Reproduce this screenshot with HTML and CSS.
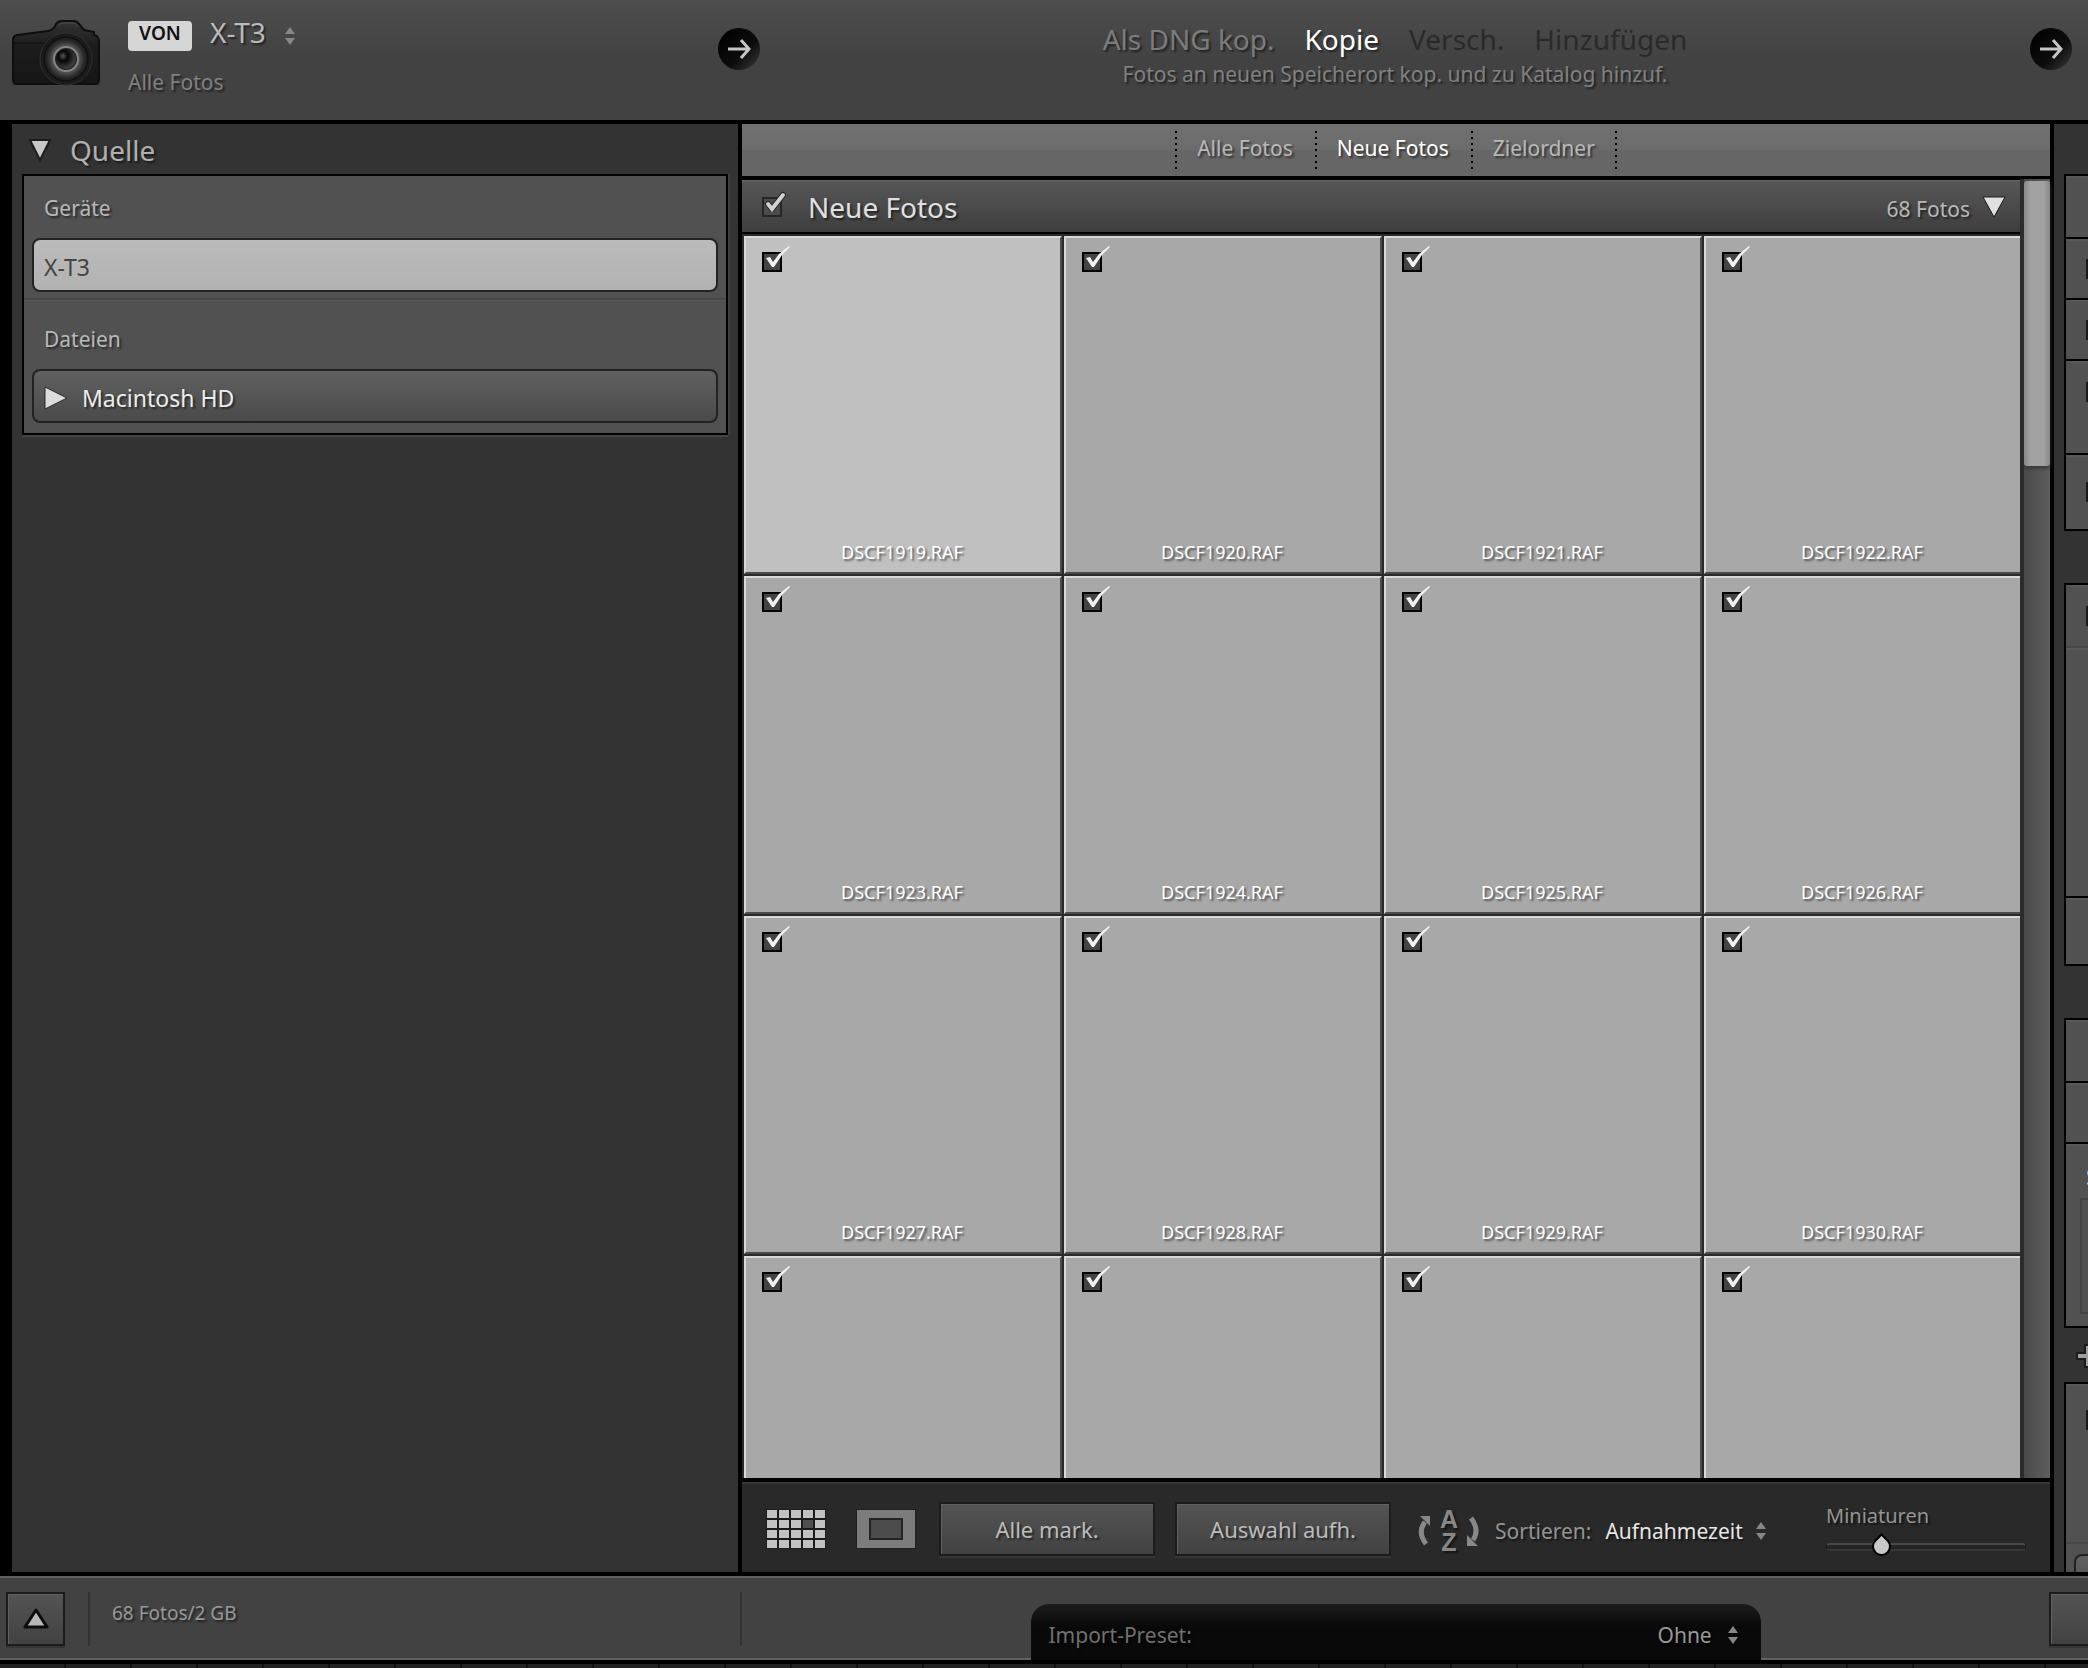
FILE: index.html
```html
<!doctype html>
<html lang="de">
<head>
<meta charset="utf-8">
<title>Fotos importieren</title>
<link rel="stylesheet" href="styles.css">
</head>

<body>
<!-- shared icons -->
<svg class="defs" width="0" height="0" aria-hidden="true">
	<symbol id="check" viewBox="0 0 30 30">
		<path d="M4 14 L8 13 L11 18 L17 10 L27 2 L28 3 L20 11 L12 23 L10 23 Z" fill="#f2f2f2"/>
	</symbol>
	<symbol id="checkHead" viewBox="0 0 30 30">
		<path d="M6 15 L10 20 L21 6" fill="none" stroke="#222" stroke-width="6" stroke-linecap="round" stroke-linejoin="round"/>
		<path d="M6 15 L10 20 L21 6" fill="none" stroke="#d0d0d0" stroke-width="4" stroke-linecap="round"/>
	</symbol>
	<symbol id="updown" viewBox="0 0 12 18">
		<path d="M6 0 L11 7 H1 Z M6 18 L11 11 H1 Z" fill="#888"/>
	</symbol>
	<symbol id="go" viewBox="0 0 42 42">
		<circle cx="21" cy="21" r="21" fill="url(#goFill)"/>
		<path d="M10 21 H30 M23 12 L31 21 L23 30" fill="none" stroke="#c4c4c4" stroke-width="3"/>
	</symbol>
	<linearGradient id="goFill" x1="0" y1="0" x2="1" y2="1">
		<stop offset="0" stop-color="#000"/>
		<stop offset="0.6" stop-color="#0c0c0c"/>
		<stop offset="1" stop-color="#3c3c3c"/>
	</linearGradient>
</svg>

<header class="top">
	<div class="source">
		<svg class="camera" viewBox="0 0 90 68" aria-hidden="true">
			<defs>
				<linearGradient id="camBody" x1="0" y1="0" x2="0" y2="1">
					<stop offset="0" stop-color="#343434"/>
					<stop offset="0.4" stop-color="#1c1c1c"/>
					<stop offset="1" stop-color="#161616"/>
				</linearGradient>
				<radialGradient id="camLens" cx="0.5" cy="0.5" r="0.5">
					<stop offset="0" stop-color="#6a6a6a"/>
					<stop offset="0.6" stop-color="#555"/>
					<stop offset="0.8" stop-color="#303030"/>
					<stop offset="1" stop-color="#151515"/>
				</radialGradient>
				<radialGradient id="camGlass" cx="0.35" cy="0.35" r="0.6">
					<stop offset="0" stop-color="#555"/>
					<stop offset="0.4" stop-color="#050505"/>
					<stop offset="1" stop-color="#3a3a3a"/>
				</radialGradient>
			</defs>
			<path d="M1 20 Q1 16 5 15 L36 11 Q42 10 44 4 Q46 1 50 1 H62 Q65 1 67 4 L72 10 L82 12 V15 L85 16 Q87 18 87 22 V60 Q87 64 83 64 H5 Q1 64 1 60 Z" fill="url(#camBody)" stroke="#0e0e0e" stroke-width="2"/>
			<path d="M2 23 H34" stroke="#0e0e0e"/>
			<path d="M46 6 Q48 3 51 3 H61 Q64 3 66 7" fill="none" stroke="#4c4c4c"/>
			<circle cx="54" cy="39" r="26" fill="#1b1b1b" stroke="#303030"/>
			<circle cx="54" cy="39" r="22" fill="url(#camLens)" stroke="#0c0c0c"/>
			<circle cx="54" cy="39" r="12" fill="#222" stroke="#858585" stroke-width="2"/>
			<circle cx="54" cy="39" r="10" fill="url(#camGlass)"/>
		</svg>
		<div class="sourceText">
			<div class="sourceLine">
				<span class="von">VON</span>
				<label class="picker">
					<select class="sourceSelect" aria-label="Von"><option>X-T3</option></select>
					<svg class="updown" aria-hidden="true"><use href="#updown"/></svg>
				</label>
			</div>
			<p class="hint">Alle Fotos</p>
		</div>
		<button class="go" aria-label="Quelle wählen"><svg><use href="#go"/></svg></button>
	</div>
	<div class="modes">
		<div class="modeRow">
			<button class="mode">Als DNG kop.</button>
			<button class="mode on">Kopie</button>
			<button class="mode off" disabled>Versch.</button>
			<button class="mode off" disabled>Hinzufügen</button>
		</div>
		<p class="hint">Fotos an neuen Speicherort kop. und zu Katalog hinzuf.</p>
	</div>
	<div class="target">
		<button class="go" aria-label="Ziel wählen"><svg><use href="#go"/></svg></button>
	</div>
</header>

<main class="work">
	<aside class="left">
		<h2 class="panelTitle">
			<svg class="fold" viewBox="0 0 24 24" aria-hidden="true"><path d="M2 2 H22 L12 22 Z" fill="#c8c8c8" stroke="#1c1c1c" stroke-width="2"/></svg>
			Quelle
		</h2>
		<div class="panelBox">
			<section class="group">
				<h3>Geräte</h3>
				<button class="volume picked">X-T3</button>
			</section>
			<section class="group">
				<h3>Dateien</h3>
				<button class="volume">
					<svg class="fold" viewBox="0 0 24 24" aria-hidden="true"><path d="M1 1 L23 12 L1 23 Z" fill="#ddd" stroke="#2a2a2a"/></svg>
					Macintosh HD
				</button>
			</section>
		</div>
	</aside>

	<section class="middle">
		<nav class="filters">
			<a href="#">Alle Fotos</a>
			<a href="#" class="on">Neue Fotos</a>
			<a href="#">Zielordner</a>
		</nav>
		<div class="browser">
			<div class="photos">
				<div class="photosHead">
					<label class="tick dim"><input type="checkbox" checked aria-label="Alle neuen Fotos"><svg><use href="#checkHead"/></svg></label>
					<h2>Neue Fotos</h2>
					<span class="count">68 Fotos</span>
					<svg class="fold" viewBox="0 0 24 24" aria-hidden="true"><path d="M1 2 H23 L12 22 Z" fill="#e0e0e0" stroke="#1c1c1c"/></svg>
				</div>
				<div class="grid">
					<label class="cell picked"><span class="tick"><input type="checkbox" checked><svg><use href="#check"/></svg></span><span class="name">DSCF1919.RAF</span></label>
					<label class="cell"><span class="tick"><input type="checkbox" checked><svg><use href="#check"/></svg></span><span class="name">DSCF1920.RAF</span></label>
					<label class="cell"><span class="tick"><input type="checkbox" checked><svg><use href="#check"/></svg></span><span class="name">DSCF1921.RAF</span></label>
					<label class="cell"><span class="tick"><input type="checkbox" checked><svg><use href="#check"/></svg></span><span class="name">DSCF1922.RAF</span></label>
					<label class="cell"><span class="tick"><input type="checkbox" checked><svg><use href="#check"/></svg></span><span class="name">DSCF1923.RAF</span></label>
					<label class="cell"><span class="tick"><input type="checkbox" checked><svg><use href="#check"/></svg></span><span class="name">DSCF1924.RAF</span></label>
					<label class="cell"><span class="tick"><input type="checkbox" checked><svg><use href="#check"/></svg></span><span class="name">DSCF1925.RAF</span></label>
					<label class="cell"><span class="tick"><input type="checkbox" checked><svg><use href="#check"/></svg></span><span class="name">DSCF1926.RAF</span></label>
					<label class="cell"><span class="tick"><input type="checkbox" checked><svg><use href="#check"/></svg></span><span class="name">DSCF1927.RAF</span></label>
					<label class="cell"><span class="tick"><input type="checkbox" checked><svg><use href="#check"/></svg></span><span class="name">DSCF1928.RAF</span></label>
					<label class="cell"><span class="tick"><input type="checkbox" checked><svg><use href="#check"/></svg></span><span class="name">DSCF1929.RAF</span></label>
					<label class="cell"><span class="tick"><input type="checkbox" checked><svg><use href="#check"/></svg></span><span class="name">DSCF1930.RAF</span></label>
					<label class="cell"><span class="tick"><input type="checkbox" checked aria-label="Foto 13"><svg><use href="#check"/></svg></span></label>
					<label class="cell"><span class="tick"><input type="checkbox" checked aria-label="Foto 14"><svg><use href="#check"/></svg></span></label>
					<label class="cell"><span class="tick"><input type="checkbox" checked aria-label="Foto 15"><svg><use href="#check"/></svg></span></label>
					<label class="cell"><span class="tick"><input type="checkbox" checked aria-label="Foto 16"><svg><use href="#check"/></svg></span></label>
				</div>
			</div>
			<div class="scroll"><div class="scrollThumb"></div></div>
		</div>
		<div class="toolbar">
			<button class="view" aria-label="Rasteransicht">
				<svg viewBox="0 0 60 40">
					<rect width="60" height="40" fill="#1c1c1c"/>
					<path d="M1 5H59 M1 15H59 M1 25H59 M1 35H59" stroke="#c2c2c2" stroke-width="8" stroke-dasharray="10 2"/>
					<rect x="37" y="11" width="10" height="8" fill="#505050"/>
				</svg>
			</button>
			<button class="view" aria-label="Lupenansicht">
				<svg viewBox="0 0 60 40">
					<rect width="60" height="40" fill="#202020"/>
					<rect x="1" y="1" width="58" height="38" fill="#7c7c7c"/>
					<rect x="14" y="10" width="32" height="20" fill="#4c4c4c" stroke="#242424" stroke-width="2"/>
				</svg>
			</button>
			<button class="push">Alle mark.</button>
			<button class="push">Auswahl aufh.</button>
			<div class="sort">
				<button class="order" aria-label="Sortierrichtung">
					<svg viewBox="0 0 64 48">
						<g fill="none" stroke="#888" stroke-width="5">
							<path d="M9 37 Q0 25 8 15"/>
							<path d="M54 11 Q63 23 56 33"/>
						</g>
						<path d="M3 9 H13 V19 Z M50 28 V39 H61 Z" fill="#888"/>
						<text x="32" y="21" text-anchor="middle">A</text>
						<text x="32" y="44" text-anchor="middle">Z</text>
					</svg>
				</button>
				<label class="sortLabel" for="sortBy">Sortieren:</label>
				<span class="picker">
					<select id="sortBy"><option>Aufnahmezeit</option></select>
					<svg class="updown" aria-hidden="true"><use href="#updown"/></svg>
				</span>
			</div>
			<div class="thumbs">
				<label for="thumbSize">Miniaturen</label>
				<input id="thumbSize" type="range" min="0" max="100" value="25">
			</div>
		</div>
	</section>

	<aside class="right">
		<div class="rightBox">
			<div class="rowS"></div>
			<div class="rowS"><input type="checkbox" aria-label="Option 1"></div>
			<div class="rowS"><input type="checkbox" aria-label="Option 2"></div>
			<div class="rowM"><input type="checkbox" aria-label="Option 3"></div>
			<div class="rowL"><input type="checkbox" aria-label="Option 4"></div>
		</div>
		<div class="rightBox">
			<div class="rowS faint"><input type="checkbox" aria-label="Option 5"></div>
			<div class="rowXL"></div>
			<div class="rowM"></div>
		</div>
		<div class="rightBox">
			<div class="rowS"></div>
			<div class="rowS"></div>
			<div class="rowText"><span>S</span><div class="well"></div></div>
		</div>
		<button class="plus" aria-label="Hinzufügen">
			<svg viewBox="0 0 24 24"><path d="M9 1 H15 V9 H23 V15 H15 V23 H9 V15 H1 V9 H9 Z" fill="#a0a0a0" stroke="#1c1c1c" stroke-width="2"/></svg>
		</button>
		<div class="rightBox last">
			<div class="rowDest"><input type="checkbox" aria-label="In Unterordner"></div>
			<button class="volume" aria-label="Ziel"></button>
		</div>
	</aside>
</main>

<footer class="bottom">
	<div class="status">
		<button class="push small" aria-label="Weniger Optionen">
			<svg viewBox="0 0 28 24"><path d="M14 3 L25 20 H3 Z" fill="#b8b8b8" stroke="#0c0c0c" stroke-width="3" stroke-linejoin="round"/></svg>
		</button>
		<p class="total">68 Fotos/2 GB</p>
	</div>
	<div class="presetArea">
		<div class="preset">
			<label for="preset">Import-Preset:</label>
			<span class="picker">
				<select id="preset"><option>Ohne</option></select>
				<svg class="updown" aria-hidden="true"><use href="#updown"/></svg>
			</span>
		</div>
	</div>
	<button class="push cut" aria-label="Importieren"></button>
</footer>
<div class="filmstrip"></div>
</body>
</html>
```

FILE: styles.css
```css
	*
	{
		box-sizing: border-box;
	}
	body
	{
		display: flex;
		flex-direction: column;
		height: 100vh;
		margin: 0;
		overflow: hidden;
		background: #000;
		color: #aaa;
		font-family: "Noto Sans", "Open Sans", sans-serif;
		font-size: 20px;
		line-height: 28px;
		text-shadow: 2px 2px 2px rgba(0,0,0,0.5);
	}
	h2, h3, p
	{
		margin: 0;
		font-weight: normal;
	}
	button, select, input
	{
		margin: 0;
		padding: 0;
		border: none;
		background: none;
		color: inherit;
		font: inherit;
		text-shadow: inherit;
	}
	select, input
	{
		appearance: none;
	}
	svg
	{
		display: block;
		flex: none;
	}
	.defs
	{
		position: absolute;
	}
	.picker
	{
		display: flex;
		align-items: center;
		gap: 14px;
	}
	.updown
	{
		width: 12px;
		height: 18px;
	}
	.fold
	{
		width: 24px;
		height: 24px;
	}

/*header bar*/
	.top
	{
		display: grid;
		grid-template-columns: 760px 1fr 58px;
		height: 120px;
		flex: none;
		background: linear-gradient(#4d4d4d, #424242 50%, #424242);
	}
	.source
	{
		display: flex;
		align-items: flex-start;
		padding: 20px 0 0 12px;
	}
	.camera
	{
		width: 90px;
		height: 68px;
	}
	.sourceText
	{
		flex: 1;
		padding-left: 26px;
	}
	.sourceLine
	{
		display: flex;
		align-items: center;
		gap: 18px;
		height: 24px;
		margin-bottom: 24px;
	}
	.sourceLine .picker
	{
		gap: 18px;
	}
	.sourceLine .updown
	{
		margin-top: 8px;
	}
	.von
	{
		width: 64px;
		height: 30px;
		margin-top: 8px;
		border-radius: 4px;
		background: #d6d6d6;
		color: #111;
		font-size: 19px;
		font-weight: 600;
		line-height: 24px;
		text-align: center;
		text-shadow: none;
	}
	.sourceSelect
	{
		font-size: 28px;
		line-height: 36px;
		color: #bbb;
	}
	.hint
	{
		color: #808080;
		font-size: 21px;
	}
	.go
	{
		width: 42px;
		height: 42px;
		margin-top: 8px;
	}
	.go svg
	{
		width: 42px;
		height: 42px;
	}
	.target
	{
		padding-top: 20px;
	}
	.modes
	{
		display: flex;
		flex-direction: column;
		align-items: center;
		gap: 3px;
		padding-top: 21px;
	}
	.modeRow
	{
		display: flex;
		gap: 30px;
	}
	.mode
	{
		color: #7c7c7c;
		font-size: 28px;
		line-height: 36px;
	}
	.mode.on
	{
		color: #fff;
	}
	.mode.off
	{
		color: #2a2a2a;
		text-shadow: none;
	}

	.work
	{
		display: grid;
		grid-template-columns: 726px 1fr 34px;
		gap: 4px;
		flex: 1;
		min-height: 0;
		padding: 4px 0 4px 12px;
	}

/*source panel on the left*/
	.left
	{
		padding: 6px 10px;
		background: #333;
	}
	.panelTitle
	{
		display: flex;
		align-items: center;
		gap: 18px;
		padding: 0 6px 4px;
		color: #b0b0b0;
		font-size: 28px;
		line-height: 40px;
	}
	.panelBox
	{
		border: 2px solid #000;
		background: #515151;
		box-shadow: 0 2px 0 #444, 2px 0 0 #3e3e3e;
	}
	.group
	{
		padding: 18px 8px 6px;
		border-bottom: 2px solid #484848;
	}
	.group + .group
	{
		padding: 24px 8px 10px;
		border-bottom: none;
		border-top: 1px solid #595959;
	}
	.group h3
	{
		padding: 0 12px 16px;
		color: #b8b8b8;
		font-size: 21px;
	}
	.volume
	{
		display: flex;
		align-items: center;
		gap: 14px;
		width: 100%;
		height: 54px;
		padding: 3px 10px 0;
		border: 2px solid #222;
		border-radius: 8px;
		background: linear-gradient(#606060, #4a4a4a);
		color: #ececec;
		font-size: 23px;
	}
	.volume.picked
	{
		background: linear-gradient(#bbb, #b2b2b2);
		color: #444;
		text-shadow: none;
	}

/*photo browser*/
	.middle
	{
		display: flex;
		flex-direction: column;
		min-width: 0;
		min-height: 0;
	}
	.filters
	{
		display: flex;
		justify-content: center;
		align-items: center;
		height: 52px;
		flex: none;
		background: linear-gradient(#707070, #6c6c6c 50%, #666 50%);
	}
	.filters a
	{
		padding: 3px 22px 7px;
		color: #b8b8b8;
		font-size: 21px;
		text-decoration: none;
		/*dotted divider on the left edge*/
		background: repeating-linear-gradient(#000 0 2px, transparent 2px 6px) left / 2px 100% no-repeat;
	}
	.filters a:last-child
	{
		background: repeating-linear-gradient(#000 0 2px, transparent 2px 6px) left / 2px 100% no-repeat,
			repeating-linear-gradient(#000 0 2px, transparent 2px 6px) right / 2px 100% no-repeat;
	}
	.filters a.on
	{
		color: #fff;
	}
	.browser
	{
		display: flex;
		flex: 1;
		min-height: 0;
		border-top: 3px solid #000;
	}
	.photos
	{
		display: flex;
		flex-direction: column;
		flex: 1;
		min-width: 0;
		overflow: hidden;
		background: #2a2a2a;
	}
	.photosHead
	{
		display: flex;
		align-items: center;
		height: 55px;
		flex: none;
		padding: 2px 14px 0 20px;
		border-top: 1px solid #000;
		border-bottom: 2px solid #000;
		background: linear-gradient(#686868, #565656 4%, #3e3e3e);
		color: #e0e0e0;
	}
	.photosHead h2
	{
		flex: 1;
		padding-left: 26px;
		font-size: 28px;
	}
	.count
	{
		padding: 4px 12px 0 0;
		color: #b8b8b8;
		font-size: 21px;
	}
	.grid
	{
		display: grid;
		grid-template-columns: repeat(4, 1fr);
		grid-auto-rows: 338px;
		gap: 2px;
		/*last column runs under the scrollbar edge*/
		margin-right: -2px;
		padding: 2px 0 0 2px;
	}
	.cell
	{
		display: flex;
		flex-direction: column;
		justify-content: space-between;
		padding: 14px 18px 6px 16px;
		border: 2px solid #d8d8d8;
		border-right-color: #4a4a4a;
		border-bottom-color: #4a4a4a;
		background: #a8a8a8;
	}
	.cell.picked
	{
		background: #c0c0c0;
	}
	.name
	{
		color: #fff;
		font-size: 18px;
		text-align: center;
	}
	.tick
	{
		display: block;
		position: relative;
		width: 20px;
		height: 20px;
	}
	.tick input
	{
		display: block;
		width: 20px;
		height: 20px;
		border: 2px solid #000;
		background: #444;
	}
	.tick svg
	{
		position: absolute;
		left: 0;
		top: -8px;
		width: 30px;
		height: 30px;
	}
	.tick.dim input
	{
		border-color: #262626;
		background: #4c4c4c;
	}
	.scroll
	{
		width: 30px;
		padding-top: 2px;
		border-left: 4px solid #2c2c2c;
		background: linear-gradient(to right, #4a4a4a, #5e5e5e);
	}
	.scrollThumb
	{
		height: 22%;
		border-radius: 3px;
		background: linear-gradient(to right, #888, #a2a2a2 25%, #a2a2a2 75%, #888);
		box-shadow: 0 2px 4px #333;
	}

/*toolbar below the grid*/
	.toolbar
	{
		display: flex;
		align-items: center;
		height: 94px;
		flex: none;
		padding: 4px 24px 0;
		border-top: 4px solid #000;
		background: #292929;
		box-shadow: inset 0 2px 0 #363636;
	}
	.view
	{
		margin-right: 30px;
	}
	.view svg
	{
		width: 60px;
		height: 40px;
	}
	.push
	{
		width: 216px;
		height: 54px;
		flex: none;
		border: 2px solid #1c1c1c;
		background: linear-gradient(#545454, #424242);
		box-shadow: inset 1px 1px 0 #606060, 0 2px 0 #363636;
		color: #bbb;
		font-size: 22px;
	}
	.view + .push
	{
		margin: 0 20px 0 -7px;
	}
	.sort
	{
		display: flex;
		align-items: center;
		gap: 14px;
		flex: 1;
		padding: 4px 0 0 26px;
		font-size: 21px;
	}
	.sort .picker
	{
		gap: 12px;
		color: #e6e6e6;
	}
	.sortLabel
	{
		color: #949494;
	}
	.order svg
	{
		width: 64px;
		height: 48px;
		overflow: visible;
	}
	.order text
	{
		fill: #888;
		font-family: "Liberation Sans", Arial, sans-serif;
		font-size: 25px;
		font-weight: bold;
	}
	.thumbs
	{
		display: flex;
		flex-direction: column;
		gap: 3px;
		width: 200px;
		flex: none;
		padding-top: 4px;
		color: #949494;
		font-size: 20px;
	}
	.thumbs input
	{
		width: 100%;
		height: 28px;
	}
	.thumbs input::-webkit-slider-runnable-track
	{
		height: 8px;
		border: 1px solid #1a1a1a;
		border-top: 2px solid #484848;
		border-bottom: 2px solid #383838;
		border-radius: 4px;
		background: #242424;
	}
	.thumbs input::-webkit-slider-thumb
	{
		appearance: none;
		width: 19px;
		height: 19px;
		margin-top: -8px;
		border: 2px solid #000;
		border-radius: 0 50% 50% 50%;
		background: #c8c8c8;
		transform: rotate(45deg);
	}

/*right panel, only its edge is visible*/
	.right
	{
		padding: 50px 0 0 10px;
		overflow: hidden;
		background: #333;
	}
	.rightBox
	{
		margin-bottom: 52px;
		border: 2px solid #000;
		border-right: none;
		background: #515151;
		overflow: hidden;
	}
	.rightBox > div
	{
		display: flex;
		align-items: center;
		padding-left: 20px;
		box-shadow: inset 0 2px 0 #585858;
	}
	.rightBox > div + div
	{
		border-top: 2px solid #000;
	}
	.rightBox > .faint + div
	{
		border-top-color: #474747;
	}
	.rightBox input
	{
		width: 20px;
		height: 20px;
		flex: none;
		border: 2px solid #1a1a1a;
	}
	.rowS
	{
		height: 61px;
	}
	.rowM
	{
		height: 94px;
		padding-bottom: 30px;
	}
	.rowL
	{
		height: 76px;
	}
	.rowXL
	{
		height: 250px;
	}
	.rowXL + .rowM
	{
		height: 68px;
	}
	.rightBox > .rowText
	{
		display: block;
		height: 184px;
		padding: 18px 0 0 14px;
		color: #d8d8d8;
		font-size: 22px;
	}
	.rowText span
	{
		padding-left: 6px;
	}
	.well
	{
		height: 116px;
		margin-top: 8px;
		border: 2px solid #444;
		border-right: none;
	}
	.plus
	{
		display: block;
		width: 12px;
		margin: -36px 0 14px 12px;
		overflow: hidden;
	}
	.plus svg
	{
		width: 24px;
		height: 24px;
	}
	.last
	{
		height: 220px;
	}
	.rightBox > .rowDest
	{
		height: 160px;
		padding-bottom: 86px;
		border-bottom: 2px solid #474747;
	}
	.last .volume
	{
		width: auto;
		min-width: 14px;
		margin: 10px 0 10px 8px;
		padding: 0 6px;
		border-right: none;
		border-radius: 8px 0 0 8px;
	}

/*footer*/
	.bottom
	{
		display: grid;
		grid-template-columns: 742px 1fr 39px;
		height: 84px;
		flex: none;
		border-top: 2px solid #606060;
		border-bottom: 2px solid #606060;
		background: #424242;
	}
	.status
	{
		display: flex;
		padding: 14px 0 12px 6px;
	}
	.push.small
	{
		display: flex;
		align-items: center;
		justify-content: center;
		width: 59px;
		margin-right: 23px;
	}
	.small svg
	{
		width: 28px;
		height: 24px;
	}
	.total
	{
		flex: 1;
		padding: 7px 22px;
		border-left: 2px solid #333;
		border-right: 2px solid #333;
		color: #989898;
		font-size: 19px;
	}
	.presetArea
	{
		display: flex;
		justify-content: center;
		align-items: flex-end;
	}
	.preset
	{
		display: flex;
		align-items: center;
		justify-content: space-between;
		width: 730px;
		height: 56px;
		margin-bottom: -2px;
		padding: 6px 22px 0 18px;
		border-radius: 18px 18px 0 0;
		background: linear-gradient(#1c1c1c, #090909 40%);
		color: #707070;
		font-size: 21px;
	}
	.preset .picker
	{
		color: #989898;
	}
	.push.cut
	{
		width: auto;
		margin-top: 14px;
		border-right: none;
	}
	.filmstrip
	{
		height: 8px;
		flex: none;
		border-top: 4px solid #000;
		background: repeating-linear-gradient(to right, #222 0 64px, #111 64px 66px);
	}
```
